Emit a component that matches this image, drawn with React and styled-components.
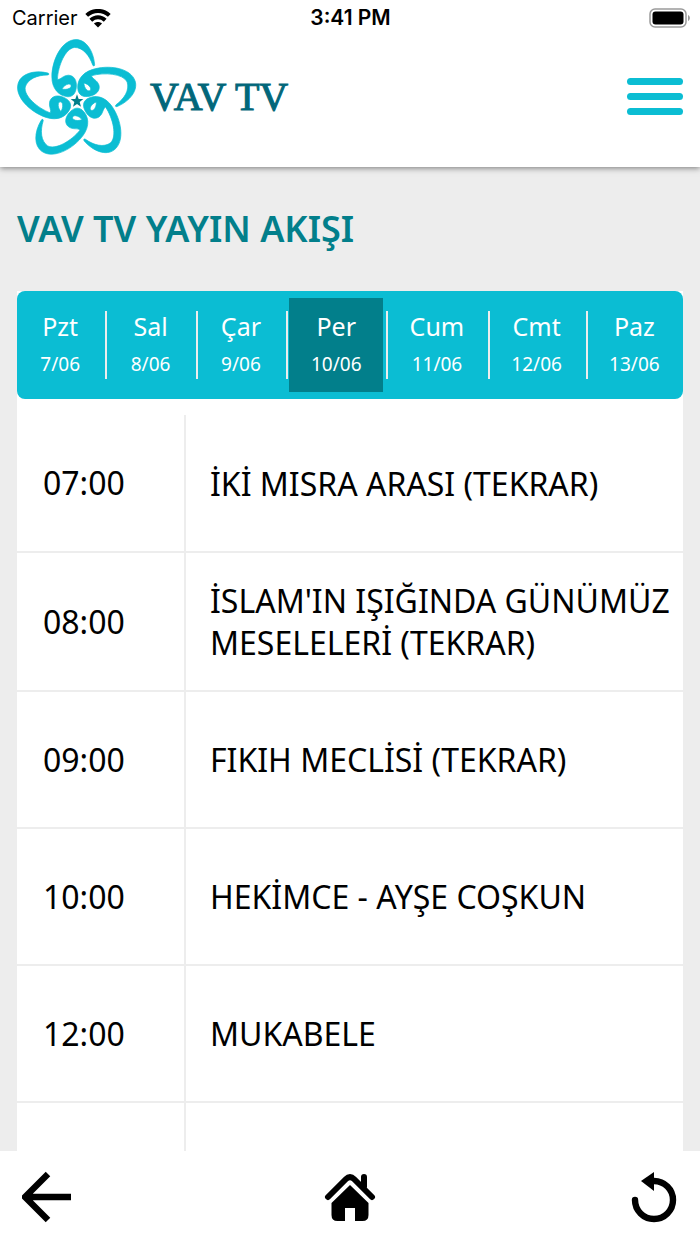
import React from 'react';
import styled, { createGlobalStyle } from 'styled-components';

const Global = createGlobalStyle`
  *, *::before, *::after { box-sizing: border-box; }
  body { margin: 0; background: #ededed; color: #000; font-family: "Noto Sans", sans-serif; }
  button { border: 0; padding: 0; background: none; color: inherit; font: inherit; cursor: pointer; }
  a { color: inherit; text-decoration: none; }
`;

const Shell = styled.div`
  height: 100vh;
  display: flex;
  flex-direction: column;
  overflow: hidden;
`;

const Top = styled.header`
  flex: none;
  background: #fff;
  box-shadow: 0 1px 6px rgba(0, 0, 0, 0.5);
  z-index: 1;
`;

const StatusBar = styled.div`
  display: grid;
  grid-template-columns: 1fr auto 1fr;
  align-items: center;
  height: 36px;
  padding: 0 9px 0 10px;
  font-family: Inter, sans-serif;
  font-size: 20px;
  line-height: 36px;
`;

const Carrier = styled.span`
  display: flex;
  align-items: center;
  gap: 7px;
  padding-left: 2px;
`;

const Clock = styled.time`
  font-size: 21px;
  font-weight: 600;
`;

const BatteryIcon = styled.svg`
  justify-self: end;
`;

const Masthead = styled.div`
  display: flex;
  align-items: center;
  justify-content: space-between;
  height: 131px;
  padding: 0 17px 10px 16px;
`;

const Brand = styled.a`
  display: flex;
  align-items: center;
  gap: 12px;
`;

const FlowerMark = styled.svg`
  overflow: visible;
`;

const BrandName = styled.span`
  color: #02677a;
  font-family: "Liberation Serif", serif;
  font-size: 40px;
  line-height: 48px;
  -webkit-text-stroke: 1px #02677a;
`;

const MenuButton = styled.button`
  display: grid;
  gap: 8px;
  width: 56px;
`;

const MenuBar = styled.span`
  height: 7px;
  border-radius: 4px;
  background: #0bbdd3;
`;

const Content = styled.main`
  flex: 1;
  min-height: 0;
  overflow-y: auto;
  scrollbar-width: none;
  padding: 32px 17px 0;
`;

const Title = styled.h1`
  margin: 0 0 32px;
  color: #027f8b;
  font-size: 36px;
  font-weight: 600;
  line-height: 60px;
`;

const Panel = styled.section`
  background: #fff;
`;

const Days = styled.nav`
  display: flex;
  align-items: center;
  height: 108px;
  margin-bottom: 16px;
  border-radius: 8px;
  background: #0bbdd3;
  color: #fff;
`;

const DaySlot = styled.div`
  flex: ${(p) => p.$grow} 1 0;
  display: flex;
  align-items: center;
  justify-content: center;
  height: 68px;
  border-right: 2px solid #ededed;

  &:last-child { border-right: 0; }
`;

const DayButton = styled.button`
  display: flex;
  flex-direction: column;
  align-items: center;
  justify-content: center;
  flex: 1;
  height: 94px;
  margin: 0 3px 0 1px;
  background: ${(p) => (p.$active ? '#027f8b' : 'transparent')};
`;

const DayName = styled.span`
  font-size: 25px;
  line-height: 38px;
`;

const DayDate = styled.span`
  font-size: 19px;
  line-height: 38px;
`;

const Schedule = styled.table`
  width: 100%;
  border-collapse: collapse;
  font-size: 32px;
  line-height: 42px;
`;

const Row = styled.tr`
  height: 137px;
  border-bottom: 2px solid #ededed;
`;

const Hour = styled.th`
  width: 168px;
  padding: 0 26px;
  border-right: 2px solid #ededed;
  font-weight: 400;
  text-align: left;
`;

const Programme = styled.td`
  padding: 27px 8px 26px 24px;
`;

const BottomBar = styled.nav`
  flex: none;
  display: flex;
  align-items: center;
  justify-content: space-between;
  height: 93px;
  padding: 0 22px 2px;
  background: #fff;
`;

const BarButton = styled.button`
  display: flex;
`;

const days = [
  { name: 'Pzt', date: '7/06', grow: 90 },
  { name: 'Sal', date: '8/06', grow: 90 },
  { name: 'Çar', date: '9/06', grow: 90 },
  { name: 'Per', date: '10/06', grow: 100, active: true },
  { name: 'Cum', date: '11/06', grow: 101 },
  { name: 'Cmt', date: '12/06', grow: 98 },
  { name: 'Paz', date: '13/06', grow: 97 },
];

const programmes = [
  ['07:00', 'İKİ MISRA ARASI (TEKRAR)'],
  ['08:00', "İSLAM'IN IŞIĞINDA GÜNÜMÜZ MESELELERİ (TEKRAR)"],
  ['09:00', 'FIKIH MECLİSİ (TEKRAR)'],
  ['10:00', 'HEKİMCE - AYŞE COŞKUN'],
  ['12:00', 'MUKABELE'],
  ['', ''],
];

const petal =
  'M48 -110 C38 -140 18 -164 -8 -164 C-36 -160 -58 -108 -60 -66 C-48 -66 -44 -78 -26 -79 C-8 -78 0 -62 -2 -42 C-4 -24 -12 -13 -28 -13 C-56 -15 -77 -38 -77 -74 C-77 -126 -46 -188 -3 -188 C26 -188 50 -156 54 -112 C54 -106 50 -106 48 -110 Z M-46 -37 C-42 -44 -34 -51 -25 -52 C-16 -51 -16 -43 -23 -39 C-30 -35 -39 -35 -46 -37 Z';

function Flower() {
  return (
    <FlowerMark width="122" height="118" viewBox="-183 -189 366 354" aria-hidden="true">
      {[0, 72, 144, 216, 288].map((a) => (
        <path
          key={a}
          d={petal}
          fill="#0bbdd3"
          fillRule="evenodd"
          stroke="#0bbdd3"
          strokeWidth="2"
          transform={`rotate(${a}) scale(.98)`}
        />
      ))}
      <path d="M0 -20 L5 -6 L19 -6 L8 3 L12 17 L0 9 L-12 17 L-8 3 L-19 -6 L-5 -6 Z" fill="#027f8b" />
    </FlowerMark>
  );
}

export default function App() {
  return (
    <>
      <Global />
      <Shell>
        <Top>
          <StatusBar>
            <Carrier>
              Carrier
              <svg width="26" height="19" viewBox="0 0 26 19" fill="none" stroke="#000" strokeWidth="4" aria-hidden="true">
                <path d="M1.7 6.4 C8 .4 18 .4 24.3 6.4" />
                <path d="M5.8 11.2 C10 7.2 16 7.2 20.2 11.2" />
                <path d="M13 18.6 L9 14.6 C11.2 12.6 14.8 12.6 17 14.6 Z" fill="#000" stroke="none" />
              </svg>
            </Carrier>
            <Clock>3:41 PM</Clock>
            <BatteryIcon width="42" height="20" viewBox="0 0 42 20" aria-hidden="true">
              <rect x="1" y="1" width="36" height="18" rx="5" fill="none" stroke="#9a9a9a" strokeWidth="1.5" />
              <rect x="3.5" y="3.5" width="31" height="13" rx="3" />
              <path d="M39 7 C41.5 8 41.5 12 39 13 Z" fill="#9a9a9a" />
            </BatteryIcon>
          </StatusBar>
          <Masthead>
            <Brand href="#" aria-label="VAV TV">
              <Flower />
              <BrandName>VAV TV</BrandName>
            </Brand>
            <MenuButton aria-label="Menü">
              <MenuBar />
              <MenuBar />
              <MenuBar />
            </MenuButton>
          </Masthead>
        </Top>
        <Content>
          <Title>VAV TV YAYIN AKIŞI</Title>
          <Panel>
            <Days>
              {days.map((d) => (
                <DaySlot key={d.name} $grow={d.grow}>
                  <DayButton $active={d.active} aria-pressed={!!d.active}>
                    <DayName>{d.name}</DayName>
                    <DayDate>{d.date}</DayDate>
                  </DayButton>
                </DaySlot>
              ))}
            </Days>
            <Schedule>
              <tbody>
                {programmes.map(([hour, name]) => (
                  <Row key={hour}>
                    <Hour scope="row">{hour}</Hour>
                    <Programme>{name}</Programme>
                  </Row>
                ))}
              </tbody>
            </Schedule>
          </Panel>
        </Content>
        <BottomBar>
          <BarButton aria-label="Geri">
            <svg width="52" height="52" viewBox="2 0 52 52" fill="none" stroke="#000" strokeWidth="6.4" aria-hidden="true">
              <path d="M28 3 L5 26 L28 49 M6 26 H51" />
            </svg>
          </BarButton>
          <BarButton aria-label="Ana sayfa">
            <svg width="52" height="52" viewBox="0 0 52 52" aria-hidden="true">
              <path d="M4 26 L22 8 Q26 4 30 8 L48 26 M40 6 V16" fill="none" stroke="#000" strokeWidth="6" strokeLinecap="round" strokeLinejoin="round" />
              <path d="M26 14 L44.5 32 V44 Q44.5 50 38.5 50 H31 V37 H21 V50 H13.5 Q7.5 50 7.5 44 V32 Z" />
            </svg>
          </BarButton>
          <BarButton aria-label="Yenile">
            <svg width="52" height="52" viewBox="0 0 52 52" aria-hidden="true">
              <path d="M9 29 A19 19 0 1 0 28 10" fill="none" stroke="#000" strokeWidth="6.4" strokeLinecap="round" />
              <path d="M15 10 L28 1 V20 Z" />
            </svg>
          </BarButton>
        </BottomBar>
      </Shell>
    </>
  );
}
